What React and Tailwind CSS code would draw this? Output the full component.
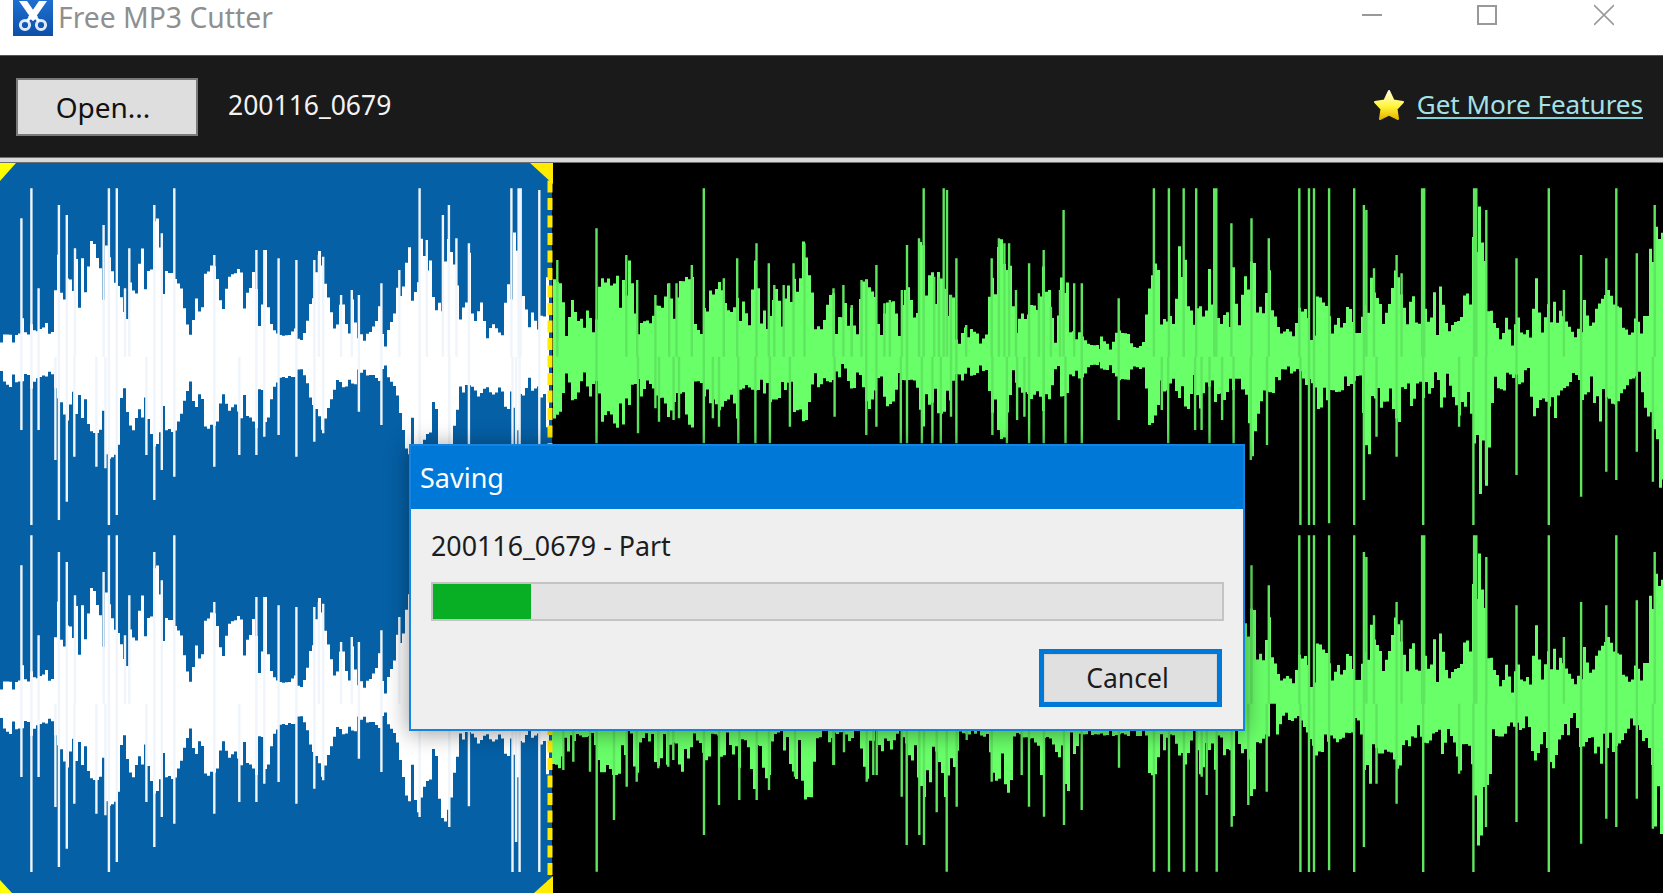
// traced from the reference: [x, y] in crop pixels, converted by body() and spikes()
const CROP_Y = 160
const MID = 590

const BLUE_TOP = [[0,525],[50,525],[60,470],[80,495],[100,520],[145,475],[160,270],[190,380],[205,265],[220,380],[228,280],[245,320],[255,235],[270,320],[285,335],[295,270],[315,360],[335,410],[345,385],[355,500],[362,345],[375,440],[388,310],[400,258],[418,400],[424,235],[432,170],[442,240],[458,330],[480,350],[500,375],[520,500],[540,480],[548,400],[565,360],[580,350],[590,300],[604,370],[620,455],[632,375],[648,345],[665,325],[680,370],[692,420],[705,340],[722,455],[738,270],[750,480],[770,520],[800,530],[825,505],[850,520],[860,460],[875,410],[890,290],[912,400],[925,470],[935,525],[955,410],[965,490],[975,520],[985,390],[995,545],[1012,515],[1030,525],[1050,490],[1060,440],[1075,545],[1100,460],[1110,380],[1120,430],[1140,265],[1165,430],[1175,225],[1190,345],[1207,300],[1225,430],[1240,480],[1245,225],[1270,330],[1285,420],[1300,460],[1312,250],[1320,505],[1345,430],[1360,540],[1375,490],[1405,530],[1415,360],[1428,430],[1435,235],[1450,295],[1465,440],[1490,470],[1505,515],[1530,340]]
const BLUE_TOP_SPIKES = [60,175,88,85,108,385,165,135,187,165,210,265,290,195,305,85,327,85,350,385,362,265,432,135,453,220,488,85,600,285,718,270,740,270,780,295,830,300,880,300,893,285,905,290,955,405,985,390,1005,405,1068,370,1118,330,1175,85,1195,240,1240,165,1257,135,1278,235,1313,250,1432,85,1452,85,1458,85,1510,90]
const BLUE_BOTTOM = [[0,655],[25,680],[35,670],[55,660],[85,680],[100,650],[125,645],[150,680],[160,720],[175,865],[190,730],[205,755],[220,765],[240,790],[260,810],[275,800],[300,885],[325,880],[335,715],[350,745],[365,820],[385,735],[400,780],[415,760],[425,855],[445,820],[470,805],[490,810],[505,745],[520,685],[550,745],[560,780],[590,800],[605,770],[620,700],[635,745],[655,735],[670,770],[690,760],[715,790],[725,720],[745,795],[760,690],[780,655],[795,650],[825,650],[850,645],[860,685],[875,740],[885,735],[900,800],[915,740],[930,690],[945,650],[960,690],[975,660],[990,680],[1000,625],[1015,650],[1040,640],[1060,660],[1075,630],[1100,680],[1110,706],[1135,866],[1150,866],[1170,906],[1185,826],[1210,796],[1225,856],[1240,941],[1260,861],[1270,776],[1285,726],[1300,676],[1320,676],[1335,706],[1360,676],[1380,706],[1400,676],[1415,766],[1430,676],[1445,811],[1465,686],[1490,686],[1505,676],[1530,811]]
const BLUE_BOTTOM_SPIKES = [60,810,88,1095,108,810,155,900,165,1080,187,1025,208,890,270,920,295,925,305,1095,327,1065,410,885,432,1020,453,930,488,950,600,920,670,885,718,885,740,830,780,825,830,890,880,845,905,820,1005,755,1068,795,1175,930,1258,960,1313,898,1435,1095,1445,1005,1455,1095,1510,1095]

const GREEN_TOP_A = [[62,360],[85,390],[95,510],[105,405],[130,490],[150,450],[165,490],[175,535],[190,340],[200,370],[215,345],[225,395],[235,345],[250,380],[265,290],[275,350],[285,460],[295,490],[320,480],[332,500],[340,440],[360,450],[380,370],[395,490],[405,370],[420,355],[445,355],[450,495],[470,530],[480,380],[500,400],[520,375],[545,465],[565,425],[585,430],[600,495],[615,310],[630,435],[650,465],[660,480],[670,375],[690,455],[715,340],[735,415],[750,250],[765,350],[780,460],[795,525],[815,440],[830,385],[842,520],[860,375],[870,520],[880,440],[895,545],[910,360],[930,385],[945,410],[960,545],[975,430],[1000,420],[1010,515],[1025,395],[1040,380],[1060,520],[1070,235],[1095,350],[1125,350],[1140,405],[1160,405],[1170,550],[1180,525],[1200,500],[1220,515],[1250,545],[1262,390],[1270,340],[1290,235],[1300,325],[1325,320],[1330,540],[1345,460],[1360,475],[1380,435],[1395,455],[1415,275],[1430,450],[1445,550],[1455,390],[1470,270],[1480,520],[1500,510],[1535,555]]
const GREEN_TOP_A_SPIKES = [75,300,183,205,265,285,295,360,345,405,383,370,403,370,445,315,478,85,533,355,570,295,623,250,657,310,672,375,698,375,725,310,755,250,835,385,862,375,885,435,912,360,925,360,953,315,975,430,990,420,1023,390,1037,255,1070,235,1083,85,1112,350,1125,350,1138,85,1147,90,1158,405,1173,295,1200,495,1270,295,1290,235,1305,250,1318,250,1337,390,1373,310,1400,400,1413,270,1433,440,1458,390,1468,150,1497,370,1518,370]
const GREEN_TOP_B = [[0,530],[10,550],[30,560],[45,510],[65,520],[85,530],[105,575],[120,510],[135,385],[155,285],[165,435],[180,495],[195,460],[205,530],[215,270],[230,210],[240,450],[260,445],[275,445],[290,500],[300,320],[330,430],[345,470],[360,455],[370,280],[385,455],[410,280],[425,320],[440,430],[455,475],[465,300],[475,445],[490,495],[505,530],[515,500],[535,530],[550,450],[570,455],[590,535],[600,405],[625,430],[635,465],[650,500],[665,465],[680,430],[695,460],[715,540],[730,455],[750,360],[765,415],[785,440],[795,470],[810,400],[820,340],[835,400],[855,510],[865,380],[880,520],[890,380],[910,490],[925,360],[935,540],[945,380],[965,520],[985,490],[1005,470],[1015,370],[1030,455],[1040,85],[1055,185],[1070,315],[1090,490],[1110,515],[1125,465],[1145,540],[1155,480],[1175,480],[1195,535],[1205,335],[1220,390],[1230,500],[1245,440],[1265,425],[1285,470],[1320,535],[1335,490],[1345,430],[1365,510],[1385,430],[1410,395],[1425,430],[1445,450],[1465,470],[1480,525],[1495,425],[1505,530],[1525,370],[1535,150],[1555,230]]
const GREEN_TOP_B_SPIKES = [52,415,150,85,192,85,233,85,268,85,318,85,324,85,366,190,422,175,470,235,555,85,582,85,596,85,638,85,708,85,735,135,742,150,763,325,826,285,840,340,897,85,903,85,1042,85,1048,85,1076,150,1160,295,1250,85,1292,390,1340,285,1410,295,1438,85,1495,280,1545,135]

// lower half of the upper channel, above the dialog
const GREEN_BOTTOM_A = [[62,775],[80,745],[95,660],[105,710],[125,715],[135,665],[150,660],[165,710],[175,645],[185,680],[195,785],[210,755],[225,775],[240,810],[265,775],[275,670],[290,670],[300,720],[320,660],[335,680],[345,705],[365,710],[380,775],[400,700],[420,700],[430,795],[445,800],[450,660],[470,665],[480,745],[500,720],[520,745],[550,705],[570,775],[585,670],[600,685],[620,685],[640,700],[660,720],[680,715],[695,700],[710,660],[720,745],[740,745],[755,790],[775,655],[790,680],[805,655],[825,665],[845,655],[860,610],[875,670],[885,700],[900,620],[915,690],[930,745],[945,690],[960,630],[975,740],[995,730],[1010,665],[1030,660],[1060,660],[1075,800],[1100,715],[1125,760],[1150,740],[1165,630],[1180,680],[1195,635],[1215,650],[1235,630],[1255,630],[1265,750],[1285,810],[1300,830],[1325,650],[1345,690],[1375,710],[1395,690],[1415,770],[1430,690],[1450,615],[1465,780],[1480,640],[1500,655],[1520,650],[1535,615]]
const GREEN_BOTTOM_A_SPIKES = [183,850,297,820,345,745,355,785,395,780,410,775,478,850,503,775,520,800,573,850,620,850,660,850,715,800,838,770,925,825,953,800,1020,850,1037,850,1078,850,1107,850,1130,850,1158,770,1173,850,1272,825,1312,850,1340,780,1360,770,1373,850,1413,850,1473,850,1518,850]
const GREEN_BOTTOM_B = [[0,625],[30,630],[50,660],[80,655],[100,620],[115,630],[125,680],[135,800],[150,770],[165,700],[185,690],[200,650],[215,710],[240,745],[260,670],[275,740],[290,660],[310,700],[330,775],[350,690],[380,690]]
const GREEN_BOTTOM_B_SPIKES = [52,780,172,750,190,850,265,810,283,810,305,850,340,780,372,850]

// right of the dialog, used by both channels
const GREEN_BOTTOM_C = [[405,700],[420,890],[430,800],[440,750],[455,690],[470,700],[490,680],[505,625],[530,640],[550,625],[570,670],[600,740],[625,730],[640,680],[660,700],[680,680],[700,670],[720,630],[730,760],[745,910],[755,700],[775,740],[790,720],[810,740],[830,790],[845,680],[865,745],[885,640],[895,710],[915,700],[930,660],[950,745],[965,660],[985,715],[1005,800],[1020,680],[1035,780],[1050,985],[1075,960],[1085,760],[1095,680],[1120,690],[1140,640],[1160,680],[1190,640],[1205,770],[1225,710],[1245,730],[1260,790],[1275,690],[1300,680],[1320,625],[1335,720],[1365,680],[1385,790],[1405,710],[1425,730],[1445,710],[1470,660],[1490,650],[1500,660],[1525,780],[1545,965]]
const GREEN_BOTTOM_C_SPIKES = [420,900,465,855,558,1095,582,1095,596,1095,638,1090,708,1095,735,1020,770,830,826,890,900,1095,1000,800,1040,1095,1075,960,1160,945,1250,1095,1340,1010,1410,935,1438,960,1495,875,1540,965]

// lower half of the lower channel, below the dialog
const GREEN_LOW_A = [[455,105],[480,130],[490,22],[505,100],[515,60],[530,22],[550,40],[575,22],[600,135],[620,120],[650,155],[665,120],[690,22],[705,170],[715,50],[735,22],[760,95],[775,130],[785,55],[800,125],[815,120],[825,50],[835,130],[850,150],[880,22],[915,95],[935,70],[965,90],[985,55],[1000,100],[1010,160],[1025,22],[1040,60],[1060,205],[1075,55],[1100,190],[1115,22],[1120,75],[1140,60],[1160,90],[1170,130],[1185,155],[1195,95],[1210,230],[1230,210],[1245,45],[1270,22],[1280,60],[1300,22]]
const GREEN_LOW_A_SPIKES = [490,135,520,110,570,140,590,440,642,285,680,185,710,170,775,130,805,125,820,105,912,330,957,240,1018,225,1070,225,1107,195,1185,155,1300,120]
const GREEN_LOW_B = [[0,22],[40,22],[55,50],[70,22],[85,30],[95,110],[110,170],[118,95],[128,30],[160,90],[170,110],[180,70],[195,30],[212,22],[240,95],[262,150],[290,245],[305,60],[325,105],[335,135],[345,235],[355,85],[370,120],[385,22],[470,30],[480,100],[495,170],[510,155],[525,190],[537,215],[550,22],[620,50],[630,150],[650,22],[685,90],[695,135],[710,210],[720,22],[730,90],[745,22],[945,30],[955,145],[975,150],[985,50],[995,100],[1005,40],[1025,22],[1040,60],[1055,175],[1065,90],[1090,22],[1110,155],[1125,50],[1135,80],[1150,150],[1165,55],[1175,125],[1185,45],[1195,110],[1205,300],[1215,30],[1225,130],[1240,50],[1255,240],[1270,170],[1285,60],[1300,30]]
const GREEN_LOW_B_SPIKES = [12,120,42,82,110,170,130,150,140,150,215,215,230,360,268,330,282,360,320,262,350,440,380,245,410,45,485,170,575,150,597,245,642,275,702,300,755,255,867,128,972,440,1017,440,1062,440,1100,440,1115,155,1130,210,1160,440,1205,305,1255,240,1310,200]

const SHIFT = 347 // lower channel sits this far under the upper one
const LOW_Y = 654 // crop y of the bottom crops to the shared y
const COL = 3 // width of one waveform column

const mapX = (x, off, scale) => off + x / scale
const wobble = (x) => {
  const n = Math.sin(x * 12.9898) * 43758.5453
  return n - Math.floor(n)
}

// one column at a time, ramped between the traced points, with notches cut in
const body = (pts, off, scale, endX, cy, add = 0) => {
  const xs = pts.map(([x]) => mapX(x, off, scale))
  const amps = pts.map(([, y]) => (y + add - MID) / 3)
  const startX = Math.round(xs[0])
  let d = `M${startX} ${cy}`
  let seg = 0
  for (let x = startX; x < endX; x += COL) {
    while (seg + 1 < xs.length - 1 && xs[seg + 1] <= x) seg++
    const last = seg + 1 >= xs.length
    const span = last ? 1 : xs[seg + 1] - xs[seg]
    const t = last ? 0 : Math.min(1, Math.max(0, (x - xs[seg]) / span))
    let amp = last ? amps[seg] : amps[seg] + (amps[seg + 1] - amps[seg]) * t
    const r = wobble(x)
    amp *= r < 0.2 ? 0.66 : 0.94 + r * 0.14
    const y = (cy + amp).toFixed(1)
    d += `L${x} ${y}L${Math.min(x + COL, endX)} ${y}`
  }
  return d + `L${endX} ${cy}Z`
}
const spikes = (list, off, scale, cy, add = 0) => {
  let d = ''
  for (let i = 0; i < list.length; i += 2) {
    const x = mapX(list[i], off, scale) - 1.2
    const amp = (list[i + 1] + add - MID) / 3
    d += `M${x.toFixed(1)} ${cy}V${(cy + amp).toFixed(1)}h2.4V${cy}Z`
  }
  return d
}

const Z5 = 2.8
const Z6 = 1568 / 570
const Z7 = 1568 / 563
const C1 = CROP_Y + MID / 3
const C2 = C1 + SHIFT
const lateC = GREEN_BOTTOM_C.filter(([x]) => 1100 + x / Z7 >= 1270)
const lateCSpikes = GREEN_BOTTOM_C_SPIKES.filter((v, i, a) => (i % 2 === 0 ? 1100 + v / Z7 >= 1270 : 1100 + a[i - 1] / Z7 >= 1270))

function Waveform() {
  const white = [C1, C2].flatMap((cy) => [
    body(BLUE_TOP, 0, Z5, 549, cy),
    body(BLUE_BOTTOM, 0, Z5, 549, cy),
  ]).join('')
  const whiteSpikes = [C1, C2].flatMap((cy) => [
    spikes(BLUE_TOP_SPIKES, 0, Z5, cy),
    spikes(BLUE_BOTTOM_SPIKES, 0, Z5, cy),
  ]).join('')
  const green = [C1, C2].flatMap((cy) => [
    body(GREEN_TOP_A, 530, Z6, 1100, cy),
    body(GREEN_TOP_B, 1100, Z7, 1663, cy),
  ]).concat([
    body(GREEN_BOTTOM_A, 530, Z6, 1100, C1),
    body(GREEN_BOTTOM_B, 1100, Z7, 1245, C1),
    body(GREEN_BOTTOM_C, 1100, Z7, 1663, C1),
    body(GREEN_LOW_A, 400, 3, 833, C2, LOW_Y),
    body(GREEN_LOW_B, 830, 3, 1270, C2, LOW_Y),
    body(lateC, 1100, Z7, 1663, C2),
  ]).join('')
  const greenSpikes = [C1, C2].flatMap((cy) => [
    spikes(GREEN_TOP_A_SPIKES, 530, Z6, cy),
    spikes(GREEN_TOP_B_SPIKES, 1100, Z7, cy),
  ]).concat([
    spikes(GREEN_BOTTOM_A_SPIKES, 530, Z6, C1),
    spikes(GREEN_BOTTOM_B_SPIKES, 1100, Z7, C1),
    spikes(GREEN_BOTTOM_C_SPIKES, 1100, Z7, C1),
    spikes(GREEN_LOW_A_SPIKES, 400, 3, C2, LOW_Y),
    spikes(GREEN_LOW_B_SPIKES, 830, 3, C2, LOW_Y),
    spikes(lateCSpikes, 1100, Z7, C2),
  ]).join('')

  return (
    <svg className="absolute inset-0" width="1663" height="730" viewBox="0 163 1663 730">
      <path d={white} fill="#ffffff" />
      <path d={whiteSpikes} fill="#f0f5fb" />
      <path d={green} fill="#69ff69" />
      <path d={greenSpikes} fill="#5fe65f" />
      <line x1="550" y1="163" x2="550" y2="893" stroke="#ffea00" strokeWidth="5" strokeDasharray="12 5.5" />
      <path d="M0 163H16L0 181Z" fill="#ffff00" />
      <path d="M530 163H553V184Z" fill="#ffea00" />
      <path d="M0 880V893H12Z" fill="#ffff00" />
      <path d="M534 893L553 876V893Z" fill="#ffea00" />
    </svg>
  )
}

function Scissors() {
  return (
    <svg width="40" height="36" viewBox="0 0 40 36">
      <defs>
        <linearGradient id="appIcon" x1="0" y1="0" x2="0" y2="1">
          <stop offset="0" stopColor="#1f6fd0" />
          <stop offset="1" stopColor="#0d4fa8" />
        </linearGradient>
      </defs>
      <rect width="40" height="36" fill="url(#appIcon)" />
      <path d="M6 1L14 1L25 17L20 21Z" fill="#ffffff" />
      <path d="M34 1L26 1L15 17L20 21Z" fill="#ffffff" />
      <circle cx="12" cy="25" r="4.6" fill="none" stroke="#dfeaf8" strokeWidth="3" />
      <circle cx="28" cy="25" r="4.6" fill="none" stroke="#dfeaf8" strokeWidth="3" />
      <path d="M14 21L20 15L26 21" fill="none" stroke="#ffffff" strokeWidth="3" />
    </svg>
  )
}

function Star() {
  return (
    <svg width="32" height="34" viewBox="0 0 32 34">
      <defs>
        <linearGradient id="star" x1="0" y1="0" x2="0" y2="1">
          <stop offset="0" stopColor="#fffde0" />
          <stop offset="0.55" stopColor="#fff53a" />
          <stop offset="1" stopColor="#e8b400" />
        </linearGradient>
      </defs>
      <path d="M16 3L20.5 12.5L30 14L23.5 21L25 31L16 26.5L7 31L8.5 21L2 14L11.5 12.5Z" fill="url(#star)" stroke="url(#star)" strokeWidth="2" strokeLinejoin="round" />
    </svg>
  )
}

export default function App() {
  return (
    <div className="flex flex-col w-[1663px] h-[893px] overflow-hidden bg-white font-['Noto_Sans',sans-serif]">
      <div className="flex items-start h-[56px] shrink-0 bg-white border-b border-[#555]">
        <div className="ml-[13px] mr-[5px]"><Scissors /></div>
        <span className="text-[#8f8f8f] text-[28.3px] leading-[34px]">Free MP3 Cutter</span>
        <div className="ml-auto flex">
          <svg width="20" height="26" viewBox="0 0 20 26" className="mr-[95px]">
            <path d="M0 15H20" stroke="#999" strokeWidth="2" />
          </svg>
          <svg width="20" height="26" viewBox="0 0 20 26" className="mr-[97px]">
            <rect x="1" y="6" width="18" height="18" fill="none" stroke="#999" strokeWidth="2" />
          </svg>
          <svg width="20" height="26" viewBox="0 0 20 26" className="mr-[49px]">
            <path d="M0 5L20 25M20 5L0 25" stroke="#999" strokeWidth="1.6" />
          </svg>
        </div>
      </div>

      <div className="flex items-center h-[101px] shrink-0 bg-[#1a1a1a] pl-[16px] pr-[20px]">
        <button className="w-[182px] h-[58px] pr-[8px] bg-[#dedede] border-2 border-[#7a7a7a] text-[#111] text-[28px] leading-[40px]">Open...</button>
        <span className="ml-[30px] text-[#f2f2f2] text-[26.5px] mt-[-2px]">200116_0679</span>
        <div className="ml-auto flex items-center gap-[12px] mt-[-4px]">
          <Star />
          <a className="text-[#a5e2e8] text-[26px] underline underline-offset-[3px] decoration-2 decoration-[#85d3da]">Get More Features</a>
        </div>
      </div>

      <div className="h-[6px] shrink-0 bg-[#d9d9d9] border-y border-[#6f6f6f]" />

      <div className="relative flex flex-1 bg-black">
        <div className="w-[552px] bg-[#0560a6]" />
        <Waveform />

        <div className="absolute left-[409px] top-[281px] w-[836px] h-[287px] flex flex-col border-2 border-[#1583e0] bg-[#efefef] shadow-[0_2px_22px_rgba(0,0,0,0.4)]">
          <div className="flex items-center h-[63px] pt-[2px] shrink-0 bg-[#0078d7] pl-[9px] text-white text-[27px]">Saving</div>
          <div className="flex flex-col flex-1 pt-[19px] pl-[20px] pr-[19px]">
            <div className="text-[#1c1c1c] text-[26.8px] leading-[36px]">200116_0679 - Part</div>
            <div className="h-[39px] mt-[18px] bg-[#e3e3e3] border-2 border-[#c4c4c4]">
              <div className="w-[98px] h-full bg-[#08ae24]" />
            </div>
            <button className="self-end w-[183px] h-[58px] mt-[28px] mr-[2px] pr-[6px] bg-[#e0e0e0] border-[5px] border-[#0078d7] outline outline-1 outline-[#d4d4d4] outline-offset-[-6px] text-[#1c1c1c] text-[26.5px] leading-[36px]">Cancel</button>
          </div>
        </div>
      </div>
    </div>
  )
}
